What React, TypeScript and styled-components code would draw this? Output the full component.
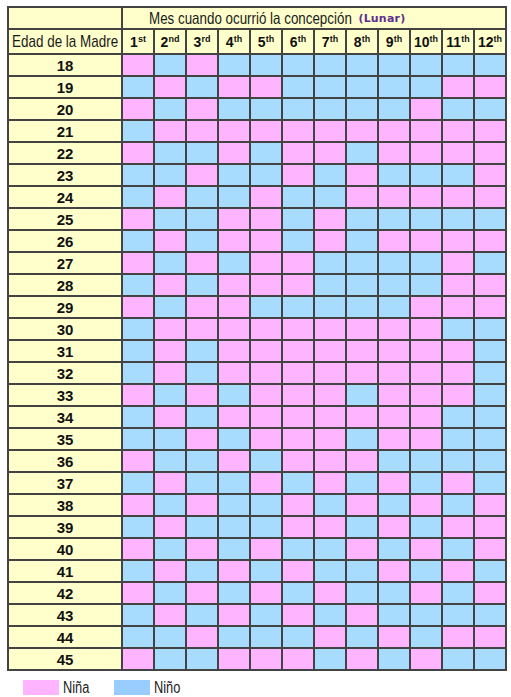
import React from "react";
import { createGlobalStyle, styled } from "styled-components";

const GlobalStyle = createGlobalStyle`
    html, body {
        margin: 0;
        padding: 0;
        background: #ffffff;
    }
    body {
        font-family: "Liberation Sans", Arial, sans-serif;
    }
`;

const Page = styled.div`
    padding: 6px 0 0 7px;
`;

const Chart = styled.div`
    display: grid;
    grid-template-columns: 112px repeat(12, 30px);
    grid-template-rows: 20px 23px repeat(28, 20px);
    gap: 2px;
    padding: 2px;
    width: max-content;
    background: #434343;
`;

// Arial Narrow look: Liberation Sans squeezed horizontally
const Narrow = styled.span<{ $scale: number; $origin?: string; $trim?: number }>`
    display: inline-block;
    flex-shrink: 0;
    white-space: nowrap;
    transform: scaleX(${(props) => props.$scale});
    transform-origin: ${(props) => props.$origin || "center"};
    margin-right: ${(props) => (props.$trim ? -props.$trim : 0)}px;
`;

const HeadCell = styled.div<{ $span?: boolean }>`
    grid-column: ${(props) => (props.$span ? "2 / span 12" : "auto")};
    background: #ffffcc;
    display: flex;
    align-items: center;
    justify-content: ${(props) => (props.$span ? "flex-start" : "center")};
    padding-left: ${(props) => (props.$span ? "26px" : "0")};
    font-size: ${(props) => (props.$span ? "16.5px" : "17px")};
    color: #1a1a1a;
    white-space: nowrap;
    overflow: visible;
`;

const Lunar = styled.span`
    font-family: "DejaVu Sans", Verdana, sans-serif;
    font-weight: bold;
    font-size: 11px;
    color: #5e2f91;
    margin-left: 6px;
    letter-spacing: 0.2px;
`;

const MonthCell = styled.div`
    background: #ffffcc;
    display: flex;
    align-items: center;
    justify-content: center;
    font-weight: bold;
    font-size: 14px;
    color: #111;
`;

const MonthLabel = styled.span`
    white-space: nowrap;
`;

const Sup = styled.span`
    font-size: 9px;
    position: relative;
    top: -5px;
`;

const AgeCell = styled.div`
    background: #ffffcc;
    display: flex;
    align-items: center;
    justify-content: center;
    font-weight: bold;
    font-size: 15px;
    color: #111;
`;

const Cell = styled.div<{ $girl: boolean }>`
    background: ${(props) => (props.$girl ? "#ffb4ff" : "#a8dcff")};
`;

const Legend = styled.div`
    display: flex;
    align-items: center;
    margin: 9px 0 0 16px;
    font-size: 16px;
    line-height: 14px;
    color: #222;
`;

const LegendItem = styled.div`
    display: flex;
    align-items: center;
    gap: 4px;
    width: 91px;
`;

const Swatch = styled.span<{ $color: string }>`
    width: 36px;
    height: 15px;
    background: ${(props) => props.$color};
`;

const months = [
    ["1", "st"],
    ["2", "nd"],
    ["3", "rd"],
    ["4", "th"],
    ["5", "th"],
    ["6", "th"],
    ["7", "th"],
    ["8", "th"],
    ["9", "th"],
    ["10", "th"],
    ["11", "th"],
    ["12", "th"],
];

// P = niña, B = niño, edades 18..45
const chart = [
    "PBPBBBBBBBBB",
    "BPBPPBBBBBPP",
    "PBPBBBBBBPBB",
    "BPPPPPPPPPPP",
    "PBBPBPPBPPPP",
    "BBPBBPBPBBBP",
    "BPBBPBBPPPPP",
    "PBBPPBPBBBBB",
    "BPBPPBPBPPPP",
    "PBPBPPBBBBPB",
    "BPBPPPBBBBPP",
    "PBPPBBBBBPPP",
    "BPPPPPPPPPBB",
    "BPBPPPPPPPPB",
    "BPBPPPPPPPPB",
    "PBPBPPPBPPPB",
    "BPBPPPPPPPBB",
    "BBPBPPPBPPBB",
    "PBBPBPPPBBBB",
    "BPBBPBPBPBPB",
    "PBPBBPBPBPBP",
    "BPBBBPPBPBPP",
    "PBPBPBBPBPBP",
    "BPBPBPBBPBPB",
    "PBPBPBPBBPBP",
    "BPBPBPBPBBBB",
    "BBPBBBPBPBPP",
    "PBBPPPBPBPBB",
];

function App() {
    return (
        <Page>
            <GlobalStyle />
            <Chart>
                <HeadCell />
                <HeadCell $span>
                    <Narrow $scale={0.81} $origin="left" $trim={47}>
                        Mes cuando ocurrió la concepción
                    </Narrow>
                    <Lunar>(Lunar)</Lunar>
                </HeadCell>
                <HeadCell>
                    <Narrow $scale={0.79}>Edad de la Madre</Narrow>
                </HeadCell>
                {months.map(([n, s]) => (
                    <MonthCell key={n}>
                        <MonthLabel>
                            {n}
                            <Sup>{s}</Sup>
                        </MonthLabel>
                    </MonthCell>
                ))}
                {chart.map((row, i) => (
                    <React.Fragment key={i}>
                        <AgeCell>{18 + i}</AgeCell>
                        {row.split("").map((c, j) => (
                            <Cell key={j} $girl={c === "P"} />
                        ))}
                    </React.Fragment>
                ))}
            </Chart>
            <Legend>
                <LegendItem>
                    <Swatch $color="#ffb4ff" />
                    <Narrow $scale={0.8} $origin="left">
                        Niña
                    </Narrow>
                </LegendItem>
                <LegendItem>
                    <Swatch $color="#99ccff" />
                    <Narrow $scale={0.8} $origin="left">
                        Niño
                    </Narrow>
                </LegendItem>
            </Legend>
        </Page>
    );
}

export default App;
